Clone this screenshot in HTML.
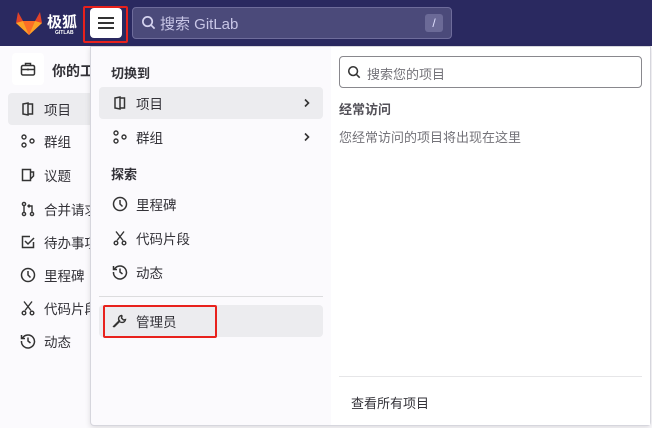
<!DOCTYPE html>
<html><head><meta charset="utf-8"><style>
*{box-sizing:border-box;margin:0;padding:0}
body{width:652px;height:428px;overflow:hidden;background:#fbfafd;font-family:"Liberation Sans","Noto Sans CJK SC",sans-serif;color:#333238;font-size:13px;position:relative}
.hdr{position:absolute;left:0;top:0;width:652px;height:46px;background:#2a2960}
.abs{position:absolute}
svg{display:block}
.it{position:absolute;display:flex;align-items:center;height:32px;font-size:13.5px;color:#333238}
.it svg{margin-right:8px}
</style></head><body>
<div class="hdr"></div>
<svg class="abs" style="left:16px;top:11px" width="26" height="24" viewBox="0 0 26 24"><path d="M2 1 L7 10 L19 10 L24 1 L26 12 L13 24 L0 12Z" fill="#e24329"/><path d="M7 10 L13 24 L19 10Z" fill="#fc6d26"/><path d="M0 12 L7 10 L13 24Z" fill="#fca326"/><path d="M26 12 L19 10 L13 24Z" fill="#fca326"/></svg>
<div class="abs" style="left:47px;top:11px;color:#fff;font-size:15px;font-weight:bold">极狐</div>
<div class="abs" style="left:55px;top:30px;color:#fff;font-size:5px;font-weight:bold">GITLAB</div>
<div class="abs" style="left:83px;top:6px;width:45px;height:37px;border:2px solid #e8211c;border-radius:2px"></div>
<div class="abs" style="left:90px;top:8px;width:32px;height:30px;background:#fff;border-radius:4px"></div>
<div class="abs" style="left:98px;top:17px;width:16px;height:2px;background:#333"></div>
<div class="abs" style="left:98px;top:22px;width:16px;height:2px;background:#333"></div>
<div class="abs" style="left:98px;top:27px;width:16px;height:2px;background:#333"></div>
<div class="abs" style="left:132px;top:7px;width:320px;height:32px;background:#4b4a7a;border:1px solid #6e6c9b;border-radius:4px"></div>
<svg class="abs" style="left:141px;top:15px" width="15" height="15" viewBox="0 0 16 16"><circle cx="7" cy="7" r="5" fill="none" stroke="#d5d3ef" stroke-width="1.8"/><path d="M11 11l3.5 3.5" stroke="#d5d3ef" stroke-width="1.8"/></svg>
<div class="abs" style="left:160px;top:13px;color:#c8c6e6;font-size:15px">搜索 GitLab</div>
<div class="abs" style="left:425px;top:14px;width:18px;height:18px;background:#6b6a97;border-radius:3px;color:#e0e0ff;font-size:12px;text-align:center;line-height:18px">/</div>
<div class="abs" style="left:12px;top:53px;width:32px;height:32px;background:#fff;border-radius:4px"></div>
<svg class="abs" style="left:20px;top:61px" width="16" height="16" viewBox="0 0 16 16" fill="none" stroke="#333" stroke-width="1.5"><rect x="1.5" y="4.5" width="13" height="9.5" rx="1.5"/><path d="M5.5 4.5V2.5h5v2M1.5 8.5h13M8 7.5v2"/></svg>
<div class="abs" style="left:52px;top:61px;font-size:14px;font-weight:bold">你的工</div>
<div class="abs" style="left:8px;top:93px;width:90px;height:32px;background:#ececef;border-radius:4px"></div>
<div class="it" style="left:20px;top:93px"><svg width="16" height="16" viewBox="0 0 16 16" fill="none" stroke="#333" stroke-width="1.5"><path d="M3 3l5-1v12l-5-1zM8 3h4.5v10H8"/></svg>项目</div>
<div class="it" style="left:20px;top:125px"><svg width="16" height="16" viewBox="0 0 16 16" fill="none" stroke="#333" stroke-width="1.4"><circle cx="4" cy="4" r="2"/><circle cx="4" cy="12" r="2"/><circle cx="12" cy="8" r="2"/></svg>群组</div>
<div class="it" style="left:20px;top:159px"><svg width="16" height="16" viewBox="0 0 16 16" fill="none" stroke="#333" stroke-width="1.5"><path d="M2.5 2.5h8v11h-8zM10.5 5h3v4l-3 3"/></svg>议题</div>
<div class="it" style="left:20px;top:193px"><svg width="16" height="16" viewBox="0 0 16 16" fill="none" stroke="#333" stroke-width="1.4"><circle cx="4" cy="3" r="1.6"/><circle cx="4" cy="13" r="1.6"/><circle cx="12" cy="13" r="1.6"/><path d="M4 5v6M12 11V5H8M9.5 3.5L8 5l1.5 1.5"/></svg>合并请求</div>
<div class="it" style="left:20px;top:226px"><svg width="16" height="16" viewBox="0 0 16 16" fill="none" stroke="#333" stroke-width="1.5"><path d="M13.5 8v5.5h-11v-11H10M5 7l3 3 6-6"/></svg>待办事项</div>
<div class="it" style="left:20px;top:259px"><svg width="16" height="16" viewBox="0 0 16 16" fill="none" stroke="#333" stroke-width="1.5"><circle cx="8" cy="8" r="6.5"/><path d="M8 4v4l2.5 2.5"/></svg>里程碑</div>
<div class="it" style="left:20px;top:292px"><svg width="16" height="16" viewBox="0 0 16 16" fill="none" stroke="#333" stroke-width="1.4"><path d="M4 1.5l7 9M12 1.5l-7 9"/><circle cx="4" cy="13" r="1.8"/><circle cx="12" cy="13" r="1.8"/></svg>代码片段</div>
<div class="it" style="left:20px;top:325px"><svg width="16" height="16" viewBox="0 0 16 16" fill="none" stroke="#333" stroke-width="1.5"><path d="M2.5 5A6.5 6.5 0 1 1 1.5 8M1.5 2v3.5H5M8 4.5V8l2.5 2"/></svg>动态</div>
<div class="abs" style="left:90px;top:46px;width:561px;height:380px;background:#fbfafd;border:1px solid #d6d6dd;border-radius:0 0 4px 4px;box-shadow:0 2px 6px rgba(0,0,0,.12)"></div>
<div class="abs" style="left:331px;top:47px;width:319px;height:378px;background:#fff"></div>
<div class="abs" style="left:111px;top:63px;font-size:13px;font-weight:bold">切换到</div>
<div class="abs" style="left:99px;top:87px;width:224px;height:32px;background:#ececef;border-radius:4px"></div>
<div class="it" style="left:112px;top:87px"><svg width="16" height="16" viewBox="0 0 16 16" fill="none" stroke="#333" stroke-width="1.5"><path d="M3 3l5-1v12l-5-1zM8 3h4.5v10H8"/></svg>项目</div>
<svg class="abs" style="left:303px;top:98px" width="8" height="10" viewBox="0 0 8 10"><path d="M2 1.5l3.5 3.5L2 8.5" fill="none" stroke="#333" stroke-width="1.6"/></svg>
<div class="it" style="left:112px;top:121px"><svg width="16" height="16" viewBox="0 0 16 16" fill="none" stroke="#333" stroke-width="1.4"><circle cx="4" cy="4" r="2"/><circle cx="4" cy="12" r="2"/><circle cx="12" cy="8" r="2"/></svg>群组</div>
<svg class="abs" style="left:303px;top:132px" width="8" height="10" viewBox="0 0 8 10"><path d="M2 1.5l3.5 3.5L2 8.5" fill="none" stroke="#333" stroke-width="1.6"/></svg>
<div class="abs" style="left:111px;top:164px;font-size:13px;font-weight:bold">探索</div>
<div class="it" style="left:112px;top:188px"><svg width="16" height="16" viewBox="0 0 16 16" fill="none" stroke="#333" stroke-width="1.5"><circle cx="8" cy="8" r="6.5"/><path d="M8 4v4l2.5 2.5"/></svg>里程碑</div>
<div class="it" style="left:112px;top:222px"><svg width="16" height="16" viewBox="0 0 16 16" fill="none" stroke="#333" stroke-width="1.4"><path d="M4 1.5l7 9M12 1.5l-7 9"/><circle cx="4" cy="13" r="1.8"/><circle cx="12" cy="13" r="1.8"/></svg>代码片段</div>
<div class="it" style="left:112px;top:256px"><svg width="16" height="16" viewBox="0 0 16 16" fill="none" stroke="#333" stroke-width="1.5"><path d="M2.5 5A6.5 6.5 0 1 1 1.5 8M1.5 2v3.5H5M8 4.5V8l2.5 2"/></svg>动态</div>
<div class="abs" style="left:99px;top:296px;width:224px;height:1px;background:#dcdcde"></div>
<div class="abs" style="left:99px;top:305px;width:224px;height:32px;background:#ececef;border-radius:4px"></div>
<div class="abs" style="left:103px;top:305px;width:114px;height:33px;border:2px solid #e8211c;border-radius:2px"></div>
<div class="it" style="left:112px;top:305px"><svg width="16" height="16" viewBox="0 0 16 16" fill="none" stroke="#333" stroke-width="1.4"><path d="M2 14l6-6M9.5 2.5a3.5 3.5 0 1 0 4 4l-2 .5-2-2 .5-2z"/><path d="M2 14l-0.5-0.5 6.5-6.5"/></svg>管理员</div>
<div class="abs" style="left:339px;top:56px;width:303px;height:32px;border:1px solid #89888d;border-radius:4px;background:#fff"></div>
<svg class="abs" style="left:347px;top:65px" width="14" height="14" viewBox="0 0 16 16"><circle cx="7" cy="7" r="5" fill="none" stroke="#333" stroke-width="1.8"/><path d="M11 11l3.5 3.5" stroke="#333" stroke-width="1.8"/></svg>
<div class="abs" style="left:367px;top:64px;color:#737278;font-size:13px">搜索您的项目</div>
<div class="abs" style="left:339px;top:99px;font-size:13px;font-weight:bold;color:#535158">经常访问</div>
<div class="abs" style="left:339px;top:127px;font-size:13px;color:#737278">您经常访问的项目将出现在这里</div>
<div class="abs" style="left:339px;top:376px;width:303px;height:1px;background:#e6e6e8"></div>
<div class="abs" style="left:351px;top:393px;font-size:13px;color:#333238">查看所有项目</div>
</body></html>
